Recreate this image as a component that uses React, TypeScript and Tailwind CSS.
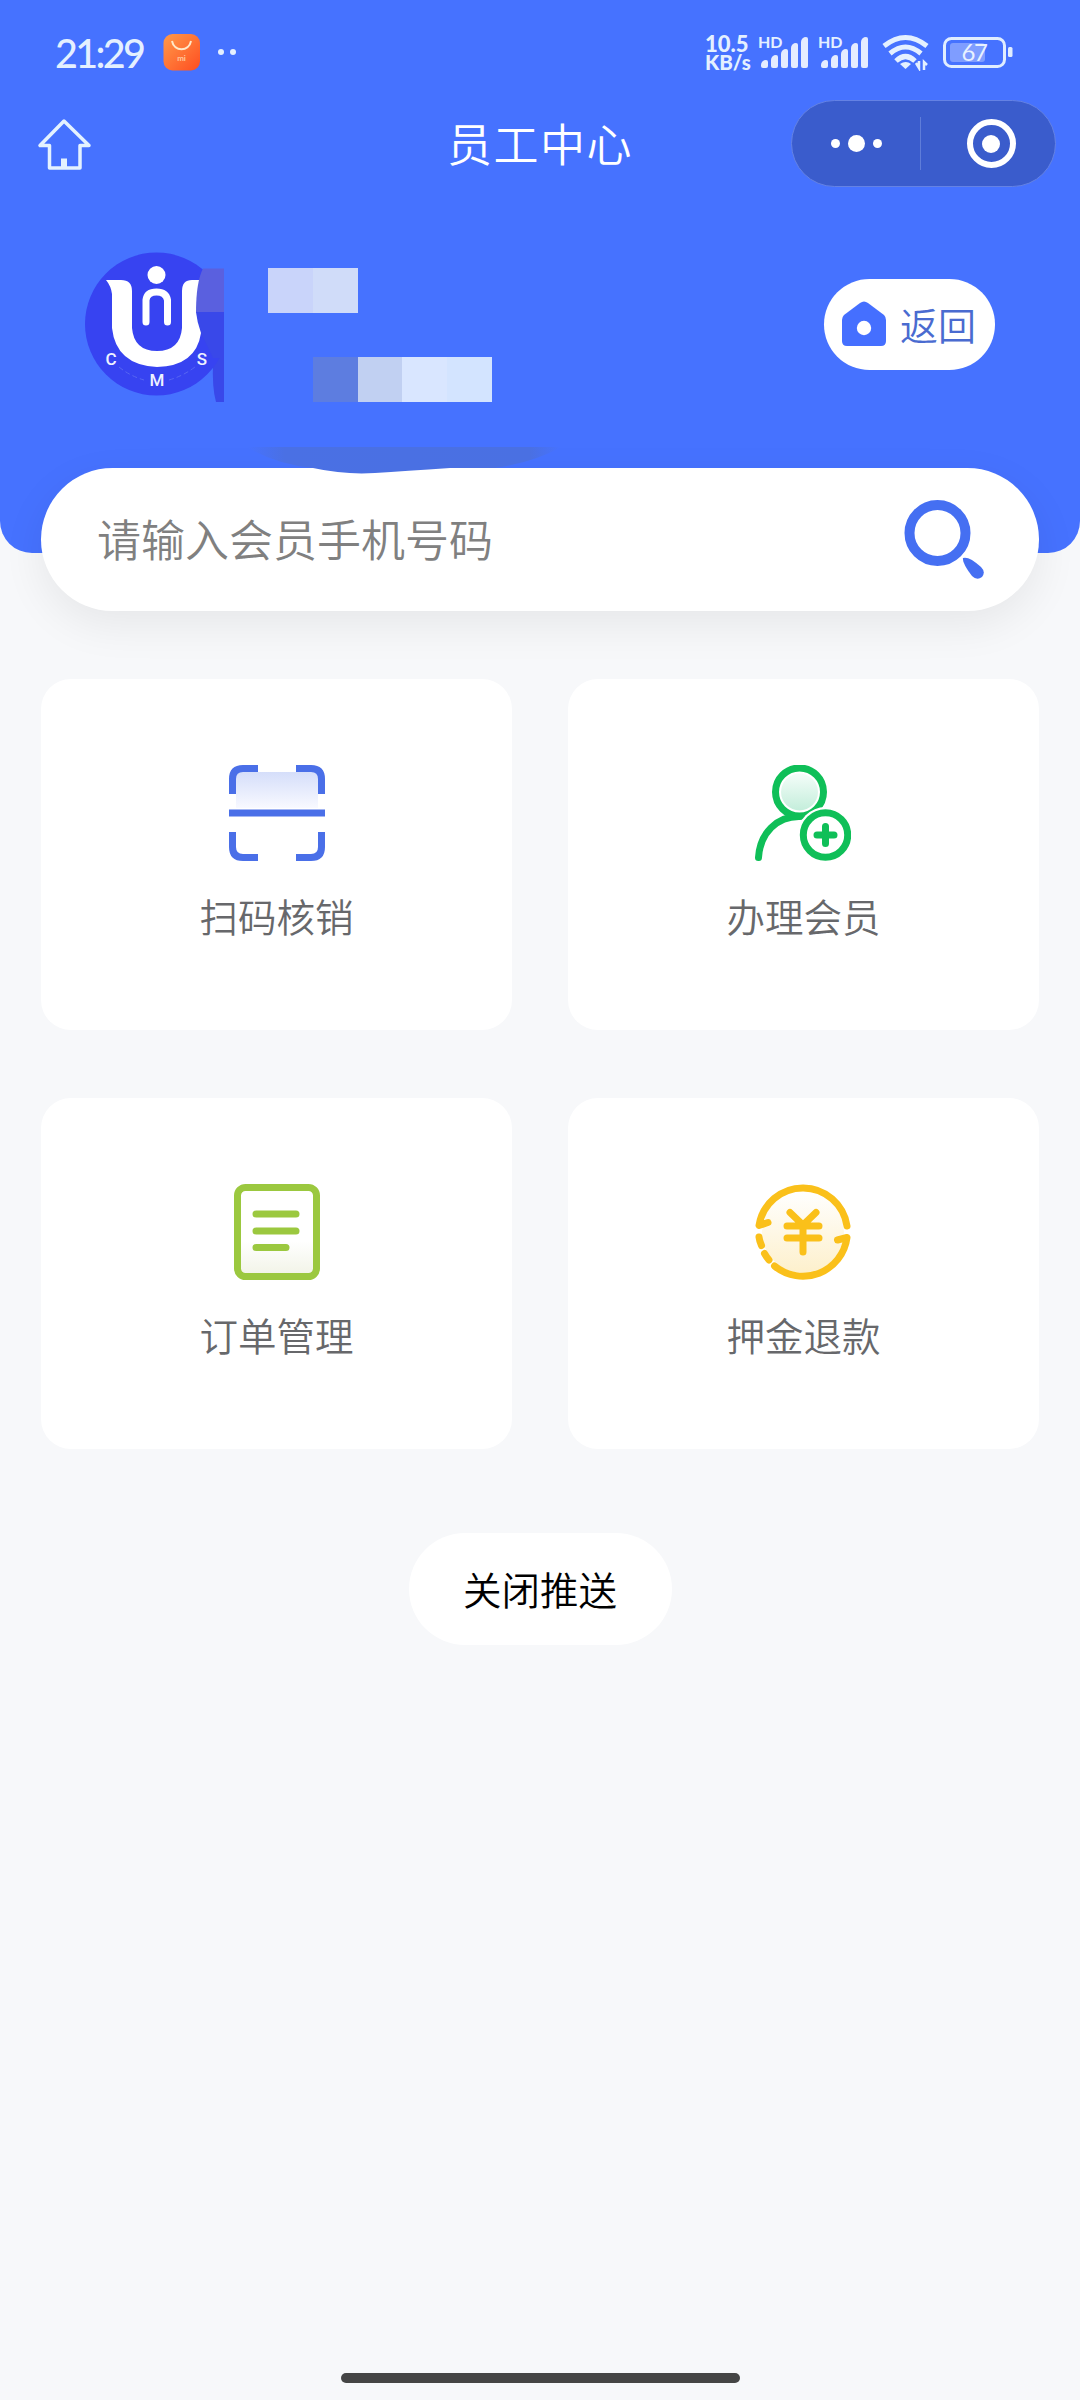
import React from 'react';

const signalBars = [
  'h-[8px]',
  'h-[13px]',
  'h-[19px]',
  'h-[25px]',
  'h-[31px]',
];

function Signal() {
  return (
    <div className="relative flex items-end gap-[3px] w-[50px] h-[34px] pl-px">
      <span className="absolute -left-[2px] top-[2px] text-[16px] leading-[12px] font-bold">HD</span>
      {signalBars.map((height) => (
        <div key={height} className={`w-[7px] shrink-0 rounded-[2px] rounded-tl-[5px] bg-[#e4ecff] ${height}`} />
      ))}
    </div>
  );
}

function StatusBar() {
  return (
    <div className="flex items-start h-[100px] pt-[34px] pl-[55px] text-[#e4f0ff] font-['Lato','Noto_Sans',sans-serif]">
      <div className="w-[108px] text-[39.5px] leading-[37px] tracking-[-2.700px] whitespace-nowrap font-medium">21:29</div>
      <svg className="w-[37px] h-[37px]" viewBox="0 0 37 37">
        <defs>
          <linearGradient id="store" x1="0" y1="0" x2="1" y2="1">
            <stop offset="0" stopColor="#ff9a4a" />
            <stop offset="1" stopColor="#ff4d20" />
          </linearGradient>
        </defs>
        <rect x="0.5" y="0" width="36.5" height="36.5" rx="9" fill="url(#store)" />
        <path d="M9 7c2 11 17 11 19 0" fill="none" stroke="#ffe9c8" strokeWidth="2" />
        <text x="18.5" y="27" textAnchor="middle" fontSize="8" fontWeight="700" fill="#ffc9a0">mi</text>
      </svg>
      <div className="flex gap-[6px] ml-[18px] mt-[15px]">
        <div className="w-[6px] h-[6px] rounded-full bg-[#e4f0ff]" />
        <div className="w-[6px] h-[6px] rounded-full bg-[#e4f0ff]" />
      </div>
      <div className="ml-auto mr-[67px] flex items-start">
        <div className="w-[55px] -ml-px text-[22px] leading-[19px] font-black whitespace-nowrap">
          <div>10.5</div>
          <div className="text-[20.5px]">KB/s</div>
        </div>
        <div className="flex gap-[10px]">
          <Signal />
          <Signal />
        </div>
        <svg className="ml-[12px] w-[47px] h-[37px]" viewBox="0 0 47 37" fill="none" stroke="#e4f0ff" strokeWidth="5">
          <path d="M2 12Q23.500 -5 45 12" />
          <path d="M8 19.500Q23.500 6.500 39 19.500" />
          <path d="M14 27Q23.500 18 33 27" />
          <path d="M18 30q6-4 11 0l-5.500 5z" fill="#e4f0ff" stroke="none" />
          <path d="M34 29l3 5v-7M42 36v-8l3 3" strokeWidth="2.500" />
        </svg>
        <svg className="ml-[13px] mt-[2px] w-[71px] h-[33px]" viewBox="0 0 71 33">
          <rect x="2.500" y="2.500" width="60" height="28" rx="7" fill="none" stroke="#e0edff" strokeWidth="3" />
          <rect x="8" y="7" width="35" height="19" rx="3" fill="#7f9dff" />
          <rect x="66" y="11" width="4.500" height="10" rx="1.500" fill="#e0edff" />
          <text x="32" y="25" textAnchor="middle" fontSize="24" fill="#e8f1ff" letterSpacing="-1.500">67</text>
        </svg>
      </div>
    </div>
  );
}

function NavBar() {
  return (
    <div className="grid grid-cols-[1fr_auto_1fr] items-center h-[87px] px-[24px]">
      <svg className="ml-[13px] w-[54px] h-[52px]" viewBox="0 0 54 52" fill="none" stroke="#e4f2ff" strokeWidth="3.500" strokeLinejoin="round">
        <path d="M27 3L3 27.500H12.500V50H43V27.500H52Z" />
        <path d="M27 40.500V50" strokeWidth="6" />
      </svg>
      <h1 className="-mt-[2px] text-[45px] leading-none font-[350] tracking-[1.500px] text-white">员工中心</h1>
      <div className="justify-self-end flex items-center w-[265px] h-[87px] rounded-full border border-[#6482e4] bg-[#3a5ccc]">
        <div className="flex-1 flex items-center justify-center gap-[8px]">
          <div className="w-[9px] h-[9px] rounded-full bg-white" />
          <div className="w-[17px] h-[17px] rounded-full bg-white" />
          <div className="w-[9px] h-[9px] rounded-full bg-white" />
        </div>
        <div className="w-px h-[53px] bg-[#5f7dd9]" />
        <div className="flex-1 flex items-center justify-center pl-[6px]">
          <div className="flex items-center justify-center w-[49px] h-[49px] rounded-full border-[6px] border-white">
            <div className="w-[18px] h-[18px] rounded-full bg-white" />
          </div>
        </div>
      </div>
    </div>
  );
}

function Avatar() {
  return (
    <svg className="w-[139px] h-[150px]" viewBox="0 0 139 150">
      <path d="M128 60H139V150H131Q127 136 128 110Z" fill="#3948e9" />
      <circle cx="71.500" cy="72" r="71.500" fill="#3743f1" />
      <path d="M21 28H36Q47 28 47 39V76Q49 99 72 99Q95 99 97 76V39Q97 28 107 28H122V76L116 81Q111 114 72 115Q31 113 27 76V42Q26 34 21 28Z" fill="#fff" />
      <path d="M118 0H143V17H118Z" fill="#4672ff" />
      <circle cx="71.500" cy="23" r="9" fill="#fff" />
      <path d="M61 70V48Q62 40 71.500 40Q81 40 82.500 48V70" fill="none" stroke="#fff" strokeWidth="7" strokeLinecap="round" />
      <path d="M118 16.500H139V60.500H111Q111 30 118 16.500Z" fill="#5a60df" />
      <path d="M111 60H139V106H128L116 81Q112 70 111 60Z" fill="#3948e9" />
      <path d="M34 115Q45 124 59 128M84 128Q98 124 110 115" fill="none" stroke="#5766f2" strokeWidth="1" strokeDasharray="5 3" />
      <g fill="#eef2ff" fontSize="17" fontWeight="500" fontFamily="Roboto, sans-serif" textAnchor="middle">
        <text x="26" y="113">C</text>
        <text x="72" y="134">M</text>
        <text x="117" y="113">S</text>
      </g>
    </svg>
  );
}

function Profile() {
  return (
    <div className="flex items-start pt-[65px] pl-[85px] pr-[85px]">
      <Avatar />
      <div className="ml-[44px] pt-[16px]">
        <div className="flex">
          <div className="w-[45px] h-[45px] bg-[#c9d4fa]" />
          <div className="w-[45px] h-[45px] bg-[#d0dcf9]" />
        </div>
        <div className="flex mt-[44px] ml-[45px]">
          <div className="w-[45px] h-[45px] bg-[#5d7de0]" />
          <div className="w-[44px] h-[45px] bg-[#c1d0f2]" />
          <div className="w-[45px] h-[45px] bg-[#d9e6ff]" />
          <div className="w-[45px] h-[45px] bg-[#d3e4ff]" />
        </div>
      </div>
      <button className="ml-auto mt-[27px] flex items-center w-[171px] h-[91px] pl-[18px] rounded-full bg-white">
        <svg className="w-[44px] h-[45px] -mt-[2px]" viewBox="0 0 44 45">
          <path d="M18 2Q22-1 26 2L42 14Q44 16 44 19V40Q44 45 39 45H5Q0 45 0 40V19Q0 16 2 14Z" fill="#456fff" />
          <circle cx="22" cy="27" r="7.200" fill="#fff" />
        </svg>
        <span className="-mt-[2px] ml-[14px] text-[38px] leading-none font-[350] text-[#4a6bd0]">返回</span>
      </button>
    </div>
  );
}

function SearchBar() {
  return (
    <div className="relative mx-[41px] -mt-[85px] flex items-center h-[143px] pl-[56px] pr-[54px] rounded-full bg-white shadow-[0_14px_44px_rgba(0,0,0,0.07)]">
      <svg className="absolute left-[204px] -top-[22px] w-[320px] h-[30px]" viewBox="0 0 320 30">
        <defs>
          <linearGradient id="smudge" x1="0" y1="0" x2="1" y2="0">
            <stop offset="0" stopColor="#4672ff" />
            <stop offset="0.120" stopColor="#4a70e4" />
            <stop offset="0.900" stopColor="#4a70e2" />
            <stop offset="1" stopColor="#4672ff" />
          </linearGradient>
        </defs>
        <path d="M2 1H316Q290 16 250 22H205Q160 25 130 27Q100 29 68 22Q30 18 2 1Z" fill="url(#smudge)" />
      </svg>
      <span className="-mt-[3px] flex-1 text-[44px] leading-none font-[350] text-[#808080]">请输入会员手机号码</span>
      <svg className="w-[82px] h-[82px] -mt-[2px]" viewBox="0 0 82 82">
        <circle cx="34.500" cy="35" r="28" fill="none" stroke="#456ff2" strokeWidth="10" />
        <path d="M60 60Q66 58 78 69Q83 74 79 79Q74 83 69 78Q59 65 60 60Z" fill="#456ff2" />
      </svg>
    </div>
  );
}

function ScanIcon() {
  return (
    <svg className="w-[96px] h-[96px]" viewBox="0 0 96 96" fill="none" stroke="#4a6fe8" strokeWidth="7">
      <defs>
        <linearGradient id="scan" x1="0" y1="0" x2="0" y2="1">
          <stop offset="0" stopColor="#d5defa" />
          <stop offset="1" stopColor="#f8f9ff" />
        </linearGradient>
      </defs>
      <rect x="7" y="7" width="82" height="36" fill="url(#scan)" stroke="none" />
      <path d="M3.500 29V14Q3.500 3.500 14 3.500H29M67 3.500H82Q92.500 3.500 92.500 14V29M3.500 67V82Q3.500 92.500 14 92.500H29M67 92.500H82Q92.500 92.500 92.500 82V67M0 48H96" />
    </svg>
  );
}

function MemberIcon() {
  return (
    <svg className="w-[96px] h-[96px] -ml-[2px]" viewBox="0 0 96 96" fill="none" stroke="#0fbf58" strokeWidth="7" strokeLinecap="round">
      <defs>
        <linearGradient id="member" x1="0" y1="0" x2="0" y2="1">
          <stop offset="0" stopColor="#f4fdf9" />
          <stop offset="1" stopColor="#c4eedb" />
        </linearGradient>
      </defs>
      <path d="M3.500 92.500C5 68 22 51 45 51.500" />
      <circle cx="44.500" cy="27" r="24" fill="#fff" />
      <circle cx="44.500" cy="27" r="18.500" fill="url(#member)" stroke="none" />
      <circle cx="70.500" cy="70" r="28" fill="#fff" stroke="none" />
      <circle cx="70.500" cy="70" r="22.200" />
      <path d="M62 70H79M70.500 61.500V78.500" />
    </svg>
  );
}

function OrderIcon() {
  return (
    <svg className="w-[96px] h-[96px]" viewBox="0 0 96 96" fill="none" stroke="#9bc83f" strokeWidth="7" strokeLinecap="round">
      <defs>
        <linearGradient id="order" x1="0" y1="0" x2="0" y2="1">
          <stop offset="0.600" stopColor="#ffffff" />
          <stop offset="1" stopColor="#f1f3e6" />
        </linearGradient>
      </defs>
      <rect x="8.500" y="3.500" width="79" height="89" rx="8" fill="url(#order)" />
      <path d="M27 30H67M27 47H67M27 63.500H57" />
    </svg>
  );
}

function RefundIcon() {
  return (
    <svg className="w-[96px] h-[96px] -ml-[2px]" viewBox="0 0 96 96" fill="none" stroke="#fac01a" strokeWidth="7" strokeLinecap="round" strokeLinejoin="round">
      <defs>
        <linearGradient id="refund" x1="0" y1="0" x2="0" y2="1">
          <stop offset="0" stopColor="#ffffff" />
          <stop offset="1" stopColor="#fdf0cc" />
        </linearGradient>
      </defs>
      <circle cx="48" cy="48" r="41" fill="url(#refund)" stroke="none" />
      <path d="M13 38.500L4 41.500A44.500 44.500 0 0 1 92 42" />
      <path d="M82.500 56L92 53.500A44.500 44.500 0 0 1 19.500 82" />
      <path d="M4 53Q4.500 57 6.500 61.500M9.500 69.500Q11.500 73 14 76" />
      <path d="M35 28.500L48 41L61 28.500M32 42H64M32 54H64M48 42V68" />
    </svg>
  );
}

const actions = [
  { name: '扫码核销', icon: ScanIcon },
  { name: '办理会员', icon: MemberIcon },
  { name: '订单管理', icon: OrderIcon },
  { name: '押金退款', icon: RefundIcon },
];

export default function App() {
  return (
    <div className="flex flex-col w-[1080px] h-[2400px] bg-[#f7f8fa] font-['Noto_Sans_CJK_SC',sans-serif]">
      <header className="h-[553px] shrink-0 rounded-b-[32px] bg-[#4672ff]">
        <StatusBar />
        <NavBar />
        <Profile />
      </header>

      <SearchBar />

      <div className="grid grid-cols-2 gap-x-[56px] gap-y-[68px] mx-[41px] mt-[68px]">
        {actions.map((action) => {
          const Icon = action.icon;
          return (
            <div key={action.name} className="flex flex-col items-center h-[351px] pt-[86px] rounded-[30px] bg-white">
              <Icon />
              <span className="mt-[35px] text-[38.5px] leading-none font-[350] text-[#67686b]">{action.name}</span>
            </div>
          );
        })}
      </div>

      <button className="self-center mt-[84px] w-[263px] h-[112px] pb-[2px] rounded-full bg-white text-[38.5px] leading-none font-[350] text-black">
        关闭推送
      </button>

      <div className="self-center mt-auto mb-[17px] w-[399px] h-[10px] rounded-full bg-[#454545]" />
    </div>
  );
}
